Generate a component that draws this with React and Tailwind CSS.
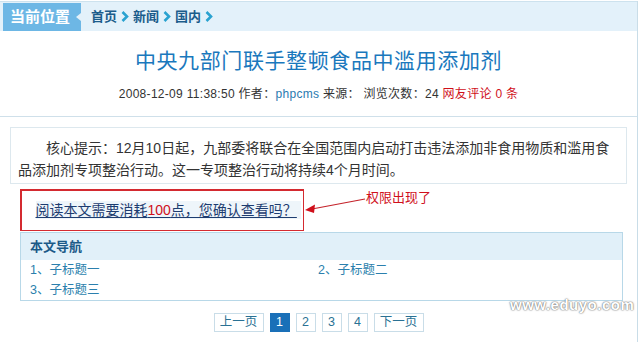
import React from 'react';

function Chevron() {
  return (
    <svg width="8" height="11" viewBox="0 0 8 11" className="mx-[4px]">
      <path d="M1.5 1 L6 5.5 L1.5 10" fill="none" stroke="#2aa2d0" strokeWidth="2.6" />
    </svg>
  );
}

export default function App() {
  const pages = ['1', '2', '3', '4'];

  return (
    <div className="relative w-[641px] h-[342px] overflow-hidden bg-white font-['Liberation_Sans','Noto_Sans_CJK_SC',sans-serif] text-[#333]">
      <div className="w-[638px] h-full border-r border-[#c9dde8]">
        {/* 当前位置 */}
        <div className="mt-px h-[30px] border-t border-[#cde2ee] bg-[#e3f1fa] flex items-end pl-[3px]">
          <div className="relative h-[28px] w-[78px] bg-[#6db7e5] flex items-center pl-[7px] text-[15px] font-bold text-white">
            当前位置
            <div className="absolute right-0 top-[10px] w-0 h-0 border-y-[4px] border-y-transparent border-r-[5px] border-r-[#e3f1fa]" />
          </div>
          <div className="h-[29px] flex items-center pl-[10px] text-[13px] font-bold text-[#1b5c8b]">
            <span>首页</span>
            <Chevron />
            <span>新闻</span>
            <Chevron />
            <span>国内</span>
            <Chevron />
          </div>
        </div>

        {/* 标题 */}
        <h1 className="pt-[18px] text-center text-[21px] leading-[24px] tracking-[0.6px] text-[#1a78bd]">
          中央九部门联手整顿食品中滥用添加剂
        </h1>
        <div className="mt-[13px] text-center text-[12px] leading-[16px] tracking-[0.3px] text-[#333]">
          2008-12-09 11:38:50 作者：<span className="text-[#2a7ab0]">phpcms</span> 来源： 浏览次数：24{' '}
          <span className="text-[#d0101b]">网友评论 0 条</span>
        </div>
        <div className="mt-[14px] h-px bg-[#cfe0ea]" />

        {/* 核心提示 */}
        <div className="mt-[10px] ml-[10px] w-[617px] border border-[#dde8ee] pt-[9px] pb-[2px] pl-[7px] pr-[10px] text-[14px] leading-[22px]">
          <p className="indent-[28px]">
            核心提示：12月10日起，九部委将联合在全国范围内启动打击违法添加非食用物质和滥用食
            <br />
            品添加剂专项整治行动。这一专项整治行动将持续4个月时间。
          </p>
        </div>

        {/* 权限 */}
        <div className="mt-[5px] flex items-start">
          <div className="ml-[20px] w-[284px] h-[42px] bg-[#d42a30] p-[1.5px] shrink-0">
            <div className="h-full bg-white flex items-center pl-[14px]">
              <a href="#" className="whitespace-nowrap bg-[#eef5fa] text-[14px] leading-[18px] text-[#1d3c70] underline underline-offset-2 pr-[4px]">
                阅读本文需要消耗<span className="text-[#d0101b]">100</span>点，您确认查看吗？
              </a>
            </div>
          </div>
          <svg width="62" height="41" viewBox="0 0 62 41" className="shrink-0">
            <line x1="8" y1="20" x2="61" y2="10" stroke="#c4222a" strokeWidth="1.2" />
            <path d="M1 21 L11 15.5 L10 24 Z" fill="#d0101b" />
          </svg>
          <span className="mt-[1px] text-[13px] leading-[16px] text-[#d0101b]">权限出现了</span>
        </div>

        {/* 本文导航 */}
        <div className="mt-[1px] ml-[20px] w-[603px] border border-[#b8d8e8]">
          <div className="h-[27px] bg-[#e1f0f9] flex items-center pl-[9px] text-[13px] font-bold text-[#1b5a88]">
            本文导航
          </div>
          <div className="grid grid-cols-[288px_1fr] pl-[9px] text-[12.5px] leading-[20px] text-[#2b7fad]">
            <span>1、子标题一</span>
            <span>2、子标题二</span>
            <span>3、子标题三</span>
          </div>
        </div>

        {/* 分页 */}
        <div className="mt-[12px] flex justify-center gap-[6px] text-[12.5px] text-[#2a7194]">
          <span className="w-[50px] h-[19px] border border-[#c9dde8] flex items-center justify-center">上一页</span>
          {pages.map((p) => (
            <span
              key={p}
              className={
                p === '1'
                  ? 'w-[20px] h-[19px] bg-[#1a70b8] text-white flex items-center justify-center'
                  : 'w-[20px] h-[19px] border border-[#c9dde8] flex items-center justify-center'
              }
            >
              {p}
            </span>
          ))}
          <span className="w-[50px] h-[19px] border border-[#c9dde8] flex items-center justify-center">下一页</span>
        </div>
      </div>

      {/* 水印 */}
      <div className="absolute left-[510px] top-[294px] text-[15px] font-bold tracking-[0.5px] text-white [text-shadow:0_0_2px_#777,0_0_1px_#555]">
        www.eduyo.com
      </div>
    </div>
  );
}
